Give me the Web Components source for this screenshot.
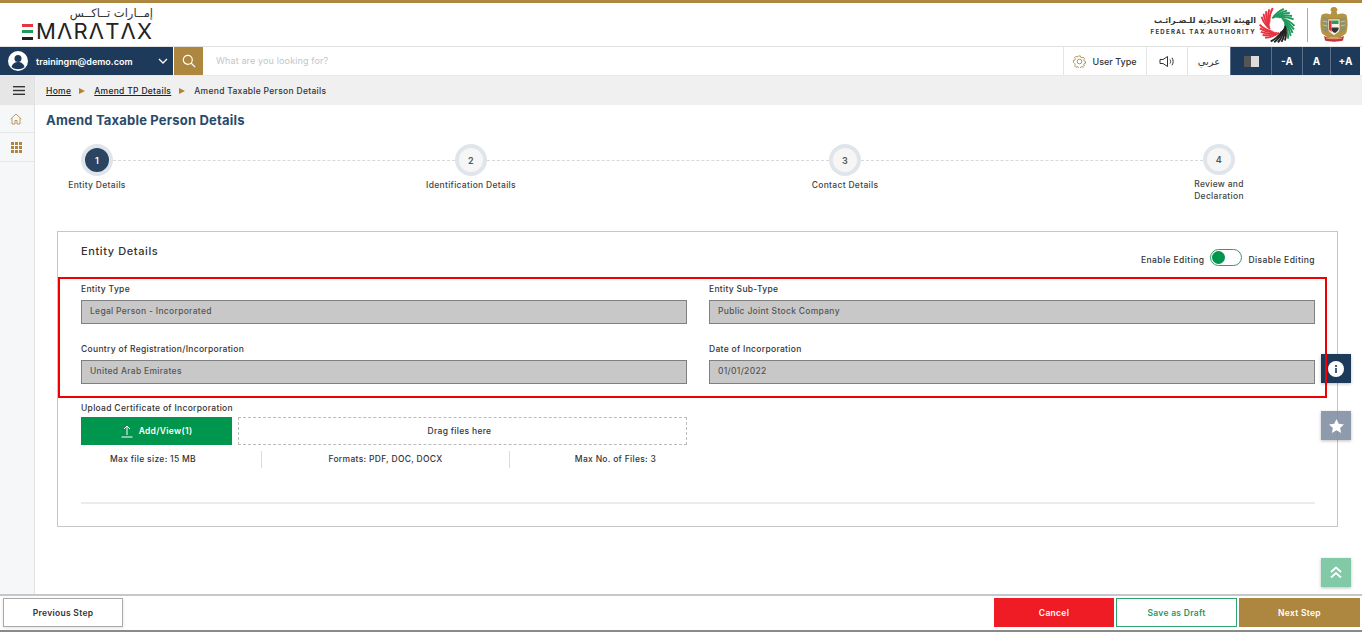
<!DOCTYPE html>
<html lang="en">
<head>
<meta charset="utf-8">
<title>Amend Taxable Person Details</title>
<style>
  html, body { margin: 0; height: 100%; background: #fff; }
  body { font-family: Inter, "Open Sans", "Liberation Sans", sans-serif; color: #333; overflow: hidden; letter-spacing: .3px; }
</style>
</head>
<body>
<tax-app></tax-app>

<script>
// base: every element writes its html + css and clones them into an open shadow root
class TaxElement extends HTMLElement {
    constructor() {
        super();
        this.attachShadow({ mode: "open" });
    }
    getTemplate() {
        const template = document.createElement("template");
        template.innerHTML = `<style>${this.getStyle()}</style>${this.getHtml()}`;
        return template;
    }
    getStyle() { return ""; }
    getHtml() { return "<slot></slot>"; }
    connectedCallback() {
        this.shadowRoot.appendChild(this.getTemplate().content.cloneNode(true));
    }
}

class TaxRing extends TaxElement {
    getStyle() { return `:host { display: block; width: 36px; height: 36px; } svg { display: block; }`; }
    // pinwheel of the FTA logo: five sectors of curved stripes
    getHtml() {
        const sectors = [
            [-125, "#1f9a5c"], [-55, "#1f9a5c"], [5, "#232323"], [75, "#e8323f"], [150, "#e8323f"]
        ];
        let paths = "";
        const pt = (r, deg) => {
            const a = deg * Math.PI / 180;
            return `${(18 + r * Math.cos(a)).toFixed(2)} ${(18 + r * Math.sin(a)).toFixed(2)}`;
        };
        sectors.forEach(([start, color]) => {
            for (let i = 0; i < 5; i++) {
                const a = start + i * 12;
                paths += `<path d="M${pt(8, a)} Q${pt(13, a + 34)} ${pt(17.5, a + 58)}" stroke="${color}"/>`;
            }
        });
        return `<svg width="36" height="36" viewBox="0 0 36 36" fill="none" stroke-width="1.9">${paths}</svg>`;
    }
}

class TaxEmblem extends TaxElement {
    getStyle() { return `:host { display: block; width: 28px; height: 35px; } svg { display: block; }`; }
    getHtml() {
        return `<svg width="28" height="35" viewBox="0 0 28 35">
            <path d="M13 0c2.500-.3 4.500 1 4.500 3l-1 1.500 1 3c3-1.500 6.500-1.500 9 .5 1.500 5 1.500 14-.5 18.500l-5 3.500H7l-5-3.500C0 22 0 13 1.500 8c2.500-2 6-2 9-.5l1-3-1-1C10.500 1.500 11.500.3 13 0z" fill="#b5933f"/>
            <path d="M2.500 10l5 1v15l-4.500-3zM25.500 10l-5 1v15l4.500-3z" fill="#8f9272"/>
            <path d="M3 14l4.500 1M3 18l4.500 1M25 14l-4.500 1M25 18l-4.500 1" stroke="#d9cf9c" stroke-width=".8"/>
            <path d="M8 12h12v10c0 3-3.300 5-6 6.500-2.700-1.500-6-3.500-6-6.500z" fill="#f4f1e6" stroke="#9b7d32" stroke-width=".7"/>
            <path d="M11.500 13.500h7V17h-7z" fill="#2a9a5e"/>
            <path d="M11.500 20.500h7v2c-1 2-2.500 3-3.500 3.500-1.500-.5-2.700-1.500-3.500-3z" fill="#333"/>
            <path d="M9 13.500h2.500V25L9 22.500z" fill="#d8333d"/>
            <path d="M4 29c3 2 17 2 20 0l-1 4.500c-4 1.500-14 1.500-18 0z" fill="#c2333b"/>
            <path d="M6 31c4 1 12 1 16 0" stroke="#e9d9a0" stroke-width=".7" fill="none"/>
        </svg>`;
    }
}

class TaxHeader extends TaxElement {
    getStyle() {
        return `
        :host { display: flex; justify-content: space-between; height: 43px; border-top: 3px solid #ad873f; background: #fff; flex: none; letter-spacing: 0; }
        .brand { display: flex; flex-direction: column; align-items: flex-end; width: 131px; margin-left: 22px; }
        .ar { font: 11.500px/14px "DejaVu Sans", sans-serif; color: #333; height: 14px; margin-top: 3px; }
        .word { display: flex; align-items: center; height: 21px; width: 131px; margin-top: 1px; }
        .e { display: flex; flex-direction: column; justify-content: space-between; height: 16px; width: 11px; flex: none; margin-right: 3px; }
        .e i { display: block; height: 3px; }
        .name { font: 400 22px/21px Inter, sans-serif; color: #222; letter-spacing: 1.2px; white-space: nowrap; }
        .fta { display: flex; align-items: center; margin-right: 14px; }
        .fta-text { display: flex; flex-direction: column; align-items: flex-end; margin: 1px 3px 0 0; }
        .fta-ar { font: 700 8px/12px "DejaVu Sans", sans-serif; color: #333; }
        .fta-en { font: 700 6px/9px Inter, sans-serif; letter-spacing: 1.3px; color: #333; white-space: nowrap; }
        .sep { width: 1px; height: 34px; background: #aaa; margin: 0 12px; }
        `;
    }
    getHtml() {
        return `
        <div class="brand" aria-label="EMARATAX">
            <div class="ar" dir="rtl" lang="ar">إمــارات تــاكــس</div>
            <div class="word">
                <div class="e"><i style="background:#e8323f"></i><i style="background:#1f9a5c"></i><i style="background:#222"></i></div>
                <span class="name">MΛRΛTΛX</span>
            </div>
        </div>
        <div class="fta">
            <div class="fta-text">
                <div class="fta-ar" dir="rtl" lang="ar">الهيئة الاتحادية للـضـرائـب</div>
                <div class="fta-en">FEDERAL TAX AUTHORITY</div>
            </div>
            <tax-ring></tax-ring>
            <div class="sep"></div>
            <tax-emblem></tax-emblem>
        </div>`;
    }
}

class TaxNavbar extends TaxElement {
    getStyle() {
        return `
        :host { display: flex; height: 30px; flex: none; box-sizing: border-box; border-top: 1px solid #e2e2e2; border-bottom: 1px solid #e8e8e8; background: #fff; font-size: 9px; }
        .user { width: 173px; background: #1e3a5a; color: #fff; display: flex; align-items: center; box-sizing: border-box; padding-left: 8px; font-weight: 600; letter-spacing: 0; }
        .user span { margin-left: 8px; flex: 1; }
        .user svg.chev { margin-right: 5px; }
        .search { width: 29px; margin-left: 1px; background: #ad873f; display: flex; align-items: center; justify-content: center; }
        .ph { flex: 1; padding-left: 13px; color: #c2c5c9; line-height: 28px; letter-spacing: .14px; }
        .cell { display: flex; align-items: center; justify-content: center; border-left: 1px solid #e4e4e4; box-sizing: border-box; color: #333; font-weight: 500; letter-spacing: 0; }
        .dark { background: #1e3a5a; color: #fff; border-left: 1px solid #5a708a; font-weight: 700; font-size: 10px; }
        .end { width: 2px; }
        `;
    }
    getHtml() {
        return `
        <div class="user">
            <svg width="20" height="20" viewBox="0 0 20 20"><circle cx="10" cy="10" r="10" fill="#fff"/><circle cx="10" cy="7.500" r="3.500" fill="#1e3a5a"/><path d="M3.500 16c.8-3.500 3.500-5 6.500-5s5.700 1.500 6.500 5c-3.500 3-9.500 3-13 0z" fill="#1e3a5a"/></svg>
            <span>trainingm@demo.com</span>
            <svg class="chev" width="10" height="6" viewBox="0 0 10 6" fill="none" stroke="#fff" stroke-width="1.300"><path d="M1 1l4 4 4-4"/></svg>
        </div>
        <div class="search">
            <svg width="14" height="14" viewBox="0 0 14 14" fill="none" stroke="#fff" stroke-width="1.200"><circle cx="5.800" cy="5.800" r="4.500"/><path d="M9 9l4.200 4.200"/></svg>
        </div>
        <div class="ph">What are you looking for?</div>
        <div class="cell" style="width:83px;gap:6px">
            <svg width="13" height="13" viewBox="0 0 13 13" fill="none" stroke="#ad873f" stroke-width=".9"><circle cx="6.500" cy="6.500" r="2.300"/><path d="M5.500 1h2l.3 1.400 1.300.6 1.300-.7 1.300 1.500-.8 1.200.4 1.300 1.400.4v1.900l-1.400.4-.5 1.300.8 1.200-1.400 1.300-1.200-.7-1.300.5-.4 1.400H5.500l-.3-1.400-1.300-.5-1.200.7-1.400-1.400.8-1.100-.5-1.300L.2 7.600V5.700l1.400-.4.500-1.300-.8-1.200L2.700 1.400l1.200.7 1.300-.6z" transform="translate(.3 0) scale(.96)"/></svg>
            User Type
        </div>
        <div class="cell" style="width:41px">
            <svg width="16" height="13" viewBox="0 0 16 13" fill="none" stroke="#333" stroke-width="1"><path d="M1 4.500h3L8.500 1.500v10L4 8.500H1z"/><path d="M11 4.500c.8 1.200.8 2.800 0 4M13 2.800c1.500 2 1.500 5.400 0 7.400"/></svg>
        </div>
        <div class="cell" style="width:43px;font-family:'DejaVu Sans',sans-serif;font-weight:400;font-size:10px" lang="ar" dir="rtl">عربي</div>
        <div class="cell dark" style="width:41px">
            <svg width="15" height="11" viewBox="0 0 15 11"><rect width="15" height="11" fill="#dcdcdc"/><rect width="7" height="11" fill="#555"/></svg>
        </div>
        <div class="cell dark" style="width:31px">-A</div>
        <div class="cell dark" style="width:28px">A</div>
        <div class="cell dark" style="width:30px">+A</div>
        <div class="end"></div>`;
    }
}

class TaxSidebar extends TaxElement {
    getStyle() {
        return `
        :host { display: flex; flex-direction: column; width: 35px; flex: none; box-sizing: border-box; border-right: 1px solid #dfe1e3; background: #f6f7f8; }
        .item { display: flex; align-items: center; justify-content: center; border-bottom: 1px solid #e6e6e6; box-sizing: border-box; }
        .menu { height: 29px; background: #e6e6e6; padding-left: 3px; }
        `;
    }
    getHtml() {
        return `
        <div class="item menu">
            <svg width="12" height="9" viewBox="0 0 12 9" fill="#333"><rect width="12" height="1.400"/><rect y="3.800" width="12" height="1.400"/><rect y="7.600" width="12" height="1.400"/></svg>
        </div>
        <div class="item" style="height:28px;padding-right:2px">
            <svg width="12" height="12" viewBox="0 0 12 12" fill="none" stroke="#b9975b" stroke-width="1"><path d="M.7 6L6 1l5.300 5M2 5.300V11h3V7.500h2V11h3V5.300"/></svg>
        </div>
        <div class="item" style="height:29px;padding-right:2px">
            <svg width="11" height="11" viewBox="0 0 11 11" fill="#ad873f"><rect width="3" height="3"/><rect x="4" width="3" height="3"/><rect x="8" width="3" height="3"/><rect y="4" width="3" height="3"/><rect x="4" y="4" width="3" height="3"/><rect x="8" y="4" width="3" height="3"/><rect y="8" width="3" height="3"/><rect x="4" y="8" width="3" height="3"/><rect x="8" y="8" width="3" height="3"/></svg>
        </div>`;
    }
}

class TaxBreadcrumb extends TaxElement {
    getStyle() {
        return `
        :host { display: flex; align-items: center; height: 29px; flex: none; background: #f0f0f0; padding-left: 11px; font-size: 8.500px; font-weight: 500; color: #333; }
        a { color: #222; text-decoration: underline; }
        i { width: 0; height: 0; margin: 0 9px 0 8px; border-left: 6px solid #b5822f; border-top: 3.500px solid transparent; border-bottom: 3.500px solid transparent; }
        `;
    }
    getHtml() {
        return `<a>Home</a><i></i><a>Amend TP Details</a><i></i><span>Amend Taxable Person Details</span>`;
    }
}

class TaxStep extends TaxElement {
    getStyle() {
        return `
        :host { display: flex; flex-direction: column; align-items: center; width: 100px; position: relative; }
        :host(:not(:last-child))::after { content: ""; position: absolute; left: 66px; top: 16px; width: 342px; border-top: 1px dashed #d6d9dc; }
        .dot { width: 32px; height: 32px; box-sizing: border-box; border-radius: 50%; border: 4px solid #e0e5ec; background: #f6f6f6; display: flex; align-items: center; justify-content: center; font-size: 9px; font-weight: 600; color: #555; }
        :host([active]) .dot { background: #2a4462; color: #fff; }
        .label { margin-top: 4px; font-size: 8.500px; line-height: 11.500px; color: #444; text-align: center; font-weight: 500; white-space: nowrap; }
        `;
    }
    getHtml() {
        return `<div class="dot">${this.getAttribute("n")}</div><div class="label"><slot></slot></div>`;
    }
}

class TaxStepper extends TaxElement {
    getStyle() {
        return `:host { display: flex; justify-content: space-between; width: 1222px; margin: 16px 0 0 12px; height: 58px; flex: none; }`;
    }
}

class TaxField extends TaxElement {
    getStyle() {
        return `
        :host { display: block; }
        .label { font-size: 8.500px; line-height: 11px; color: #333; font-weight: 500; margin-bottom: 5px; }
        .value { height: 24px; box-sizing: border-box; background: #c8c8c8; border: 1px solid #808080; padding-left: 8px; font-size: 8.500px; line-height: 20px; color: #555; font-weight: 500; }
        `;
    }
    getHtml() {
        return `<div class="label">${this.getAttribute("label")}</div><div class="value"><slot></slot></div>`;
    }
}

class TaxToggle extends TaxElement {
    getStyle() {
        return `
        :host { display: flex; align-items: center; align-self: flex-start; gap: 6px; font-size: 8.500px; color: #333; font-weight: 500; margin-top: 5px; letter-spacing: .42px; }
        span { padding-top: 4px; }
        .sw { width: 32px; height: 17px; box-sizing: border-box; border: 1px solid #2e9e6a; border-radius: 9px; padding: 1px; background: #fff; }
        .sw i { display: block; width: 13px; height: 13px; border-radius: 50%; background: #00964e; }
        `;
    }
    getHtml() {
        return `<span>Enable Editing</span><div class="sw"><i></i></div><span>Disable Editing</span>`;
    }
}

class TaxUpload extends TaxElement {
    getStyle() {
        return `
        :host { display: block; width: 606px; margin-top: 19px; font-size: 8.500px; font-weight: 500; color: #333; }
        .label { line-height: 11px; margin-bottom: 3px; white-space: nowrap; }
        .row { display: flex; gap: 6px; height: 28px; }
        .add { width: 151px; background: #00964e; color: #fff; display: flex; align-items: center; justify-content: center; gap: 6px; font-weight: 600; }
        .drop { flex: 1; border: 1px dashed #bbb; box-sizing: border-box; display: flex; align-items: center; justify-content: center; padding-right: 6px; }
        .info { display: grid; grid-template-columns: 180px 248px 178px; margin-top: 6px; height: 17px; line-height: 17px; text-align: center; }
        .info div + div { border-left: 1px solid #d5dce3; }
        .info div:first-child { padding-right: 36px; }
        .info div:last-child { padding-left: 34px; }
        `;
    }
    getHtml() {
        return `
        <div class="label">Upload Certificate of Incorporation</div>
        <div class="row">
            <div class="add">
                <svg width="12" height="13" viewBox="0 0 12 13" fill="none" stroke="#fff" stroke-width="1"><path d="M6 10V1M3 4l3-3 3 3M.500 12h11"/></svg>
                Add/View(1)
            </div>
            <div class="drop">Drag files here</div>
        </div>
        <div class="info">
            <div>Max file size: 15 MB</div>
            <div>Formats: PDF, DOC, DOCX</div>
            <div>Max No. of Files: 3</div>
        </div>`;
    }
}

class TaxCard extends TaxElement {
    getStyle() {
        return `
        :host { display: block; box-sizing: border-box; width: 1281px; height: 296px; margin: 29px 0 0 22px; border: 1px solid #c6c6c6; padding: 0 22px 0 23px; background: #fff; flex: none; }
        .head { display: flex; justify-content: space-between; height: 52px; padding-top: 12px; box-sizing: border-box; }
        h2 { margin: 0; font-size: 11px; line-height: 14px; font-weight: 500; color: #333; letter-spacing: .6px; }
        .marked { position: relative; display: grid; grid-template-columns: 606px 606px; column-gap: 22px; row-gap: 20px; }
        /* red review frame drawn over the fields */
        .marked::after { content: ""; position: absolute; left: -23px; right: -12px; top: -7px; bottom: -14px; border: 2px solid #f00000; z-index: 3; pointer-events: none; }
        hr { border: 0; height: 2px; background: #ececec; margin: 34px 0 0; }
        `;
    }
    getHtml() {
        return `
        <div class="head"><h2>Entity Details</h2><tax-toggle></tax-toggle></div>
        <div class="marked">
            <tax-field label="Entity Type">Legal Person - Incorporated</tax-field>
            <tax-field label="Entity Sub-Type">Public Joint Stock Company</tax-field>
            <tax-field label="Country of Registration/Incorporation">United Arab Emirates</tax-field>
            <tax-field label="Date of Incorporation">01/01/2022</tax-field>
        </div>
        <tax-upload></tax-upload>
        <hr>`;
    }
}

class TaxFloat extends TaxElement {
    getStyle() {
        return `
        :host { position: absolute; left: 1321px; width: 30px; height: 29px; display: flex; align-items: center; justify-content: center; box-shadow: 0 1px 3px rgba(0,0,0,.25); z-index: 2; }
        `;
    }
}

class TaxFooter extends TaxElement {
    getStyle() {
        return `
        :host { display: flex; flex: none; height: 38px; box-sizing: border-box; border-top: 2px solid #c5c8cb; border-bottom: 2px solid #8a8a8a; padding: 2px 2px 1px 3px; gap: 2px; background: #fff; }
        .btn { width: 120px; height: 29px; box-sizing: border-box; display: flex; align-items: center; justify-content: center; font-size: 8.500px; font-weight: 600; }
        .prev { border: 1px solid #aaa; color: #333; margin-right: auto; box-shadow: 0 1px 3px rgba(0,0,0,.12); }
        .cancel { background: #ef1c25; color: #fff; }
        .draft { width: 121px; border: 1px solid #2ea36b; color: #1f9a5c; background: #fff; }
        .next { width: 121px; background: #ad873f; color: #fff; }
        `;
    }
    getHtml() {
        return `
        <div class="btn prev">Previous Step</div>
        <div class="btn cancel">Cancel</div>
        <div class="btn draft">Save as Draft</div>
        <div class="btn next">Next Step</div>`;
    }
}

class TaxApp extends TaxElement {
    getStyle() {
        return `
        :host { display: flex; flex-direction: column; height: 632px; position: relative; overflow: hidden; }
        .body { flex: 1; display: flex; min-height: 0; }
        main { flex: 1; display: flex; flex-direction: column; min-width: 0; }
        h1 { margin: 7px 0 0 11px; font-size: 13px; line-height: 16px; font-weight: 700; color: #2a4a6b; flex: none; letter-spacing: .2px; }
        `;
    }
    getHtml() {
        return `
        <tax-header></tax-header>
        <tax-navbar></tax-navbar>
        <div class="body">
            <tax-sidebar></tax-sidebar>
            <main>
                <tax-breadcrumb></tax-breadcrumb>
                <h1>Amend Taxable Person Details</h1>
                <tax-stepper>
                    <tax-step n="1" active>Entity Details</tax-step>
                    <tax-step n="2">Identification Details</tax-step>
                    <tax-step n="3">Contact Details</tax-step>
                    <tax-step n="4">Review and<br>Declaration</tax-step>
                </tax-stepper>
                <tax-card></tax-card>
            </main>
        </div>
        <tax-footer></tax-footer>
        <tax-float style="top:354px;background:#1e3a5a">
            <svg width="16" height="16" viewBox="0 0 16 16"><circle cx="8" cy="8" r="8" fill="#fff"/><rect x="7" y="7" width="2" height="5" fill="#3a5f88"/><rect x="7" y="4" width="2" height="2" fill="#3a5f88"/></svg>
        </tax-float>
        <tax-float style="top:411px;background:rgba(125,141,160,.88)">
            <svg width="15" height="14" viewBox="0 0 15 14"><path d="M7.500 0l2.200 4.800 5.300.6-3.900 3.500 1.100 5.100-4.700-2.700L2.800 14l1.100-5.100L0 5.400l5.300-.6z" fill="#fff"/></svg>
        </tax-float>
        <tax-float style="top:558px;background:#82c9a8">
            <svg width="14" height="13" viewBox="0 0 14 13" fill="none" stroke="#fff" stroke-width="1.800"><path d="M2 6l5-4.500L12 6M2 11.500L7 7l5 4.500"/></svg>
        </tax-float>`;
    }
}

customElements.define("tax-ring", TaxRing);
customElements.define("tax-emblem", TaxEmblem);
customElements.define("tax-header", TaxHeader);
customElements.define("tax-navbar", TaxNavbar);
customElements.define("tax-sidebar", TaxSidebar);
customElements.define("tax-breadcrumb", TaxBreadcrumb);
customElements.define("tax-step", TaxStep);
customElements.define("tax-stepper", TaxStepper);
customElements.define("tax-field", TaxField);
customElements.define("tax-toggle", TaxToggle);
customElements.define("tax-upload", TaxUpload);
customElements.define("tax-card", TaxCard);
customElements.define("tax-float", TaxFloat);
customElements.define("tax-footer", TaxFooter);
customElements.define("tax-app", TaxApp);
</script>
</body>
</html>
